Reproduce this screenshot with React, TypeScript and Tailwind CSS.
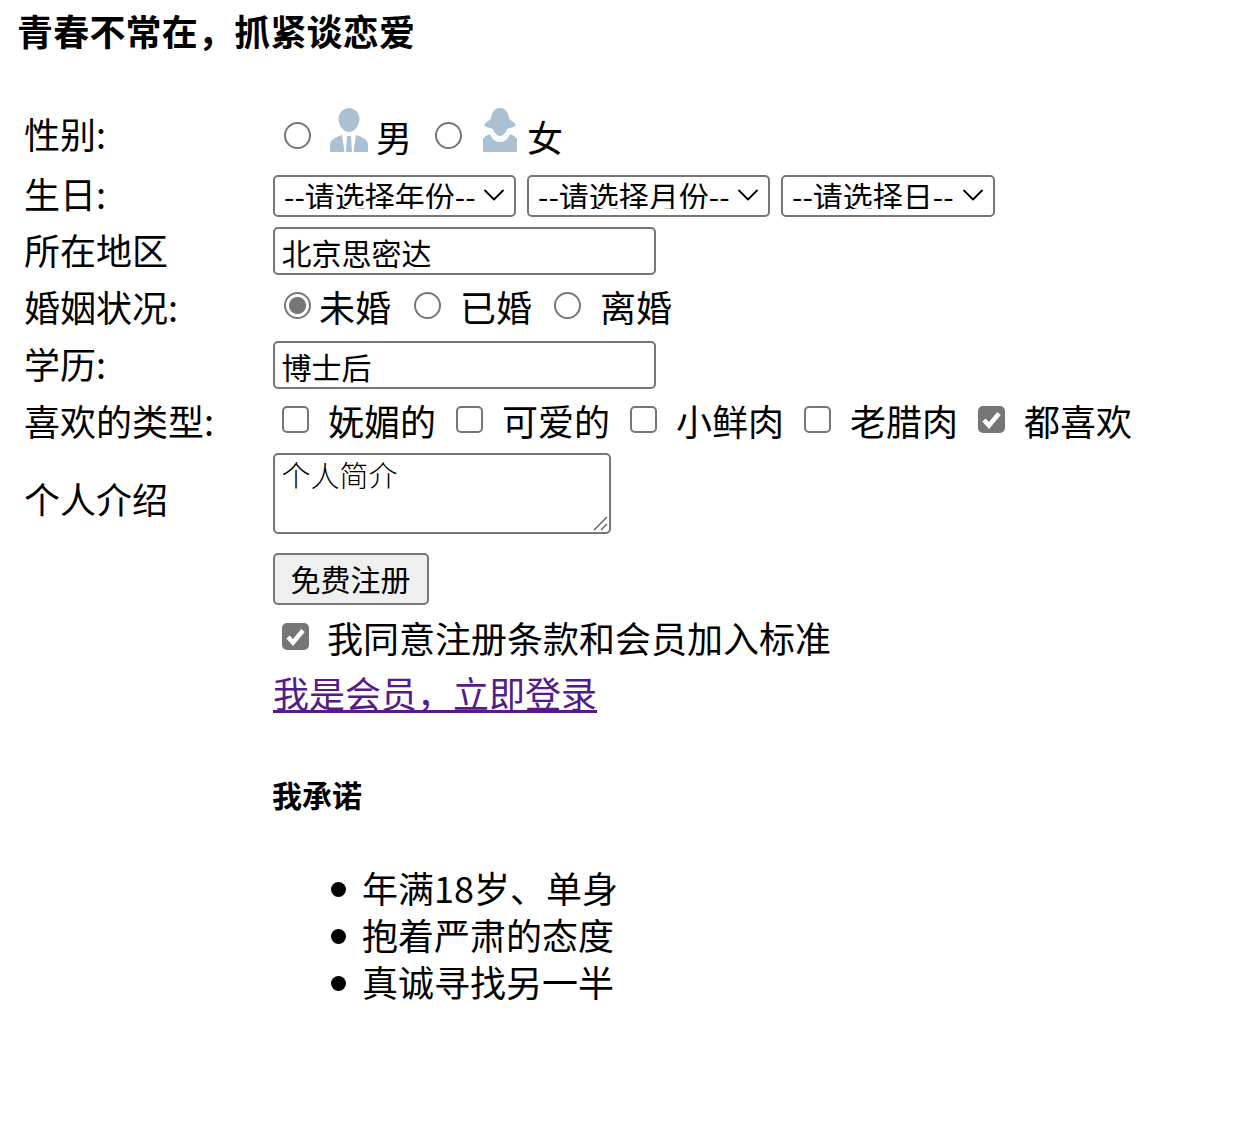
import React from "react";
import { ChevronDown } from "lucide-react";

function Male() {
  return (
    <svg width="38" height="44" viewBox="0 0 38 44" className="blur-[0.6px] block">
      <path d="M19 0C25 0 29.500 5 29.500 11C29.500 17 25 24 19 24C13 24 8.500 17 8.500 11C8.500 5 13 0 19 0Z" fill="#a9c1d3" />
      <path d="M0 44V36C1 31 6 29 12 27L14.500 44ZM38 44V36C37 31 32 29 26 27L23.500 44ZM17 28H21L22 44H16Z" fill="#a9c1d3" />
    </svg>
  );
}

function Female() {
  return (
    <svg width="36" height="44" viewBox="0 0 36 44" className="blur-[0.6px] block">
      <path d="M18 0C24 0 26 5 27 10C28 13 33 14 34 17C33 19 28 20 25 21C24 25 21 28 18 28C15 28 12 25 11 21C8 20 3 19 2 17C3 14 8 13 9 10C10 5 12 0 18 0Z" fill="#a9c1d3" />
      <path d="M1 44V31C3 28 6 27 8 26C10 31 13 34 18 34C23 34 26 31 28 26C30 27 33 28 35 31V44Z" fill="#a9c1d3" />
    </svg>
  );
}

function Radio({ checked = false, lift = false }: { checked?: boolean; lift?: boolean }) {
  return (
    <input
      type="radio"
      defaultChecked={checked}
      className={`appearance-none block w-[27px] h-[27px] m-0 shrink-0 rounded-full border-2 border-[#767676] bg-white checked:bg-[radial-gradient(circle,#767676_0,#767676_8px,#ffffff_9px)] ${lift ? "mb-[6px]" : ""}`}
    />
  );
}

function Check({ label, checked = false, tight = false }: { label: string; checked?: boolean; tight?: boolean }) {
  return (
    <label className="flex items-center">
      <span className={`relative w-[27px] h-[27px] mb-[6px] shrink-0 ${tight ? "mr-[18px]" : "mr-[19px]"}`}>
        <input
          type="checkbox"
          defaultChecked={checked}
          className="appearance-none block w-[27px] h-[27px] m-0 rounded-[5px] border-2 border-[#767676] bg-white checked:bg-[#767676]"
        />
        {checked && (
          <svg width="27" height="27" viewBox="0 0 27 27" className="absolute left-0 top-0 pointer-events-none">
            <path d="M6 14L11 19.500L21 7.500" fill="none" stroke="#ffffff" strokeWidth="4.500" />
          </svg>
        )}
      </span>
      <span className="mb-[4px]">{label}</span>
    </label>
  );
}

function Sel({ label, w }: { label: string; w: string }) {
  return (
    <div className={`relative h-[42px] mb-[1px] ${w}`}>
      <select className="appearance-none block w-full h-full border-2 border-[#767676] rounded-[5px] bg-white text-[30px] leading-[37px] pl-[9px] pb-[6px] text-black">
        <option>{label}</option>
      </select>
      <ChevronDown className="absolute right-[4px] top-[2px] pointer-events-none" size={36} strokeWidth={1.2} />
    </div>
  );
}

export default function App() {
  return (
    <div
      className="w-[1239px] h-[1125px] bg-white text-black text-[36px] leading-[54px] overflow-hidden"
      style={{ fontFamily: '"Noto Sans CJK SC", sans-serif' }}
    >
      <h4 className="pl-[17px] pt-[3px] h-[104px] font-bold text-[36px] leading-[54px] tracking-[0.2px]">青春不常在，抓紧谈恋爱</h4>

      <div className="pl-[24px] grid grid-cols-[249px_1fr]">
        <div className="h-[62px] flex items-center pb-[4px]">性别:</div>
        <div className="h-[62px] flex items-center pl-[11px]">
          <Radio />
          <span className="ml-[19px] mb-[10px]"><Male /></span>
          <span className="ml-[8px] mt-[2px]">男</span>
          <span className="ml-[23px]"><Radio /></span>
          <span className="ml-[20px] mb-[10px]"><Female /></span>
          <span className="ml-[9px] mt-[2px]">女</span>
        </div>

        <div className="h-[60px] flex items-center pb-[6px]">生日:</div>
        <div className="h-[60px] flex items-center gap-[11px]">
          <Sel label="--请选择年份--" w="w-[243px]" />
          <Sel label="--请选择月份--" w="w-[243px]" />
          <Sel label="--请选择日--" w="w-[214px]" />
        </div>

        <div className="h-[50px] flex items-center pb-[4px]">所在地区</div>
        <div className="h-[50px] flex items-center">
          <input
            defaultValue="北京思密达"
            className="w-[383px] h-[48px] mb-[1px] border-2 border-[#767676] rounded-[5px] text-[30px] pl-[6.5px] pt-[2px] leading-[40px]"
          />
        </div>

        <div className="h-[64px] flex items-center pb-[4px]">婚姻状况:</div>
        <div className="h-[64px] flex items-center pl-[11px]">
          <Radio checked lift />
          <span className="ml-[8px] mb-[4px]">未婚</span>
          <span className="ml-[23px]"><Radio lift /></span>
          <span className="ml-[19px] mb-[4px]">已婚</span>
          <span className="ml-[22px]"><Radio lift /></span>
          <span className="ml-[19px] mb-[4px]">离婚</span>
        </div>

        <div className="h-[50px] flex items-center pb-[4px]">学历:</div>
        <div className="h-[50px] flex items-center">
          <input
            defaultValue="博士后"
            className="w-[383px] h-[48px] mb-[1px] border-2 border-[#767676] rounded-[5px] text-[30px] pl-[6.5px] pt-[2px] leading-[40px]"
          />
        </div>

        <div className="h-[64px] flex items-center pb-[4px]">喜欢的类型:</div>
        <div className="h-[64px] flex items-center pl-[9px] gap-[20px]">
          <Check label="妩媚的" />
          <Check label="可爱的" />
          <Check label="小鲜肉" />
          <Check label="老腊肉" />
          <Check label="都喜欢" checked />
        </div>

        <div className="h-[80px] flex items-center pt-[8px]">个人介绍</div>
        <div className="relative h-[80px] w-[338px] -mt-[1px]">
          <textarea
            defaultValue="个人简介"
            className="w-[338px] h-[81px] border-2 border-[#767676] rounded-[5px] text-[29px] leading-[36px] pl-[6.5px] pt-[1px] resize-none font-light block"
          />
          <svg width="15" height="15" viewBox="0 0 15 15" className="absolute right-[3px] -bottom-[-2px] pointer-events-none">
            <path d="M1 14L14 1M8 14L14 8" stroke="#555555" strokeWidth="1.300" fill="none" />
          </svg>
        </div>

        <div />
        <div className="pt-[19px]">
          <button className="w-[156px] h-[52px] border-2 border-[#767676] rounded-[5px] bg-[#efefef] text-[30px] leading-[40px] pb-[2px] pr-[1px] block">
            免费注册
          </button>
        </div>

        <div />
        <div className="h-[64px] flex items-center pl-[9px] pt-[4px]">
          <Check label="我同意注册条款和会员加入标准" checked tight />
        </div>

        <div />
        <div className="h-[46px] flex items-center">
          <a href="#" className="text-[#551a8b] underline">我是会员，立即登录</a>
        </div>

        <div />
        <h5 className="pt-[57px] pb-[2px] text-[30px] leading-[44px] font-bold -ml-[1px]">我承诺</h5>

        <div />
        <ul className="list-none pl-[58px] pt-[48px]">
          {["年满18岁、单身", "抱着严肃的态度", "真诚寻找另一半"].map((t) => (
            <li key={t} className="h-[47px] leading-[47px] flex items-center">
              <span className="w-[15px] h-[15px] rounded-full bg-black mr-[16px] shrink-0" />
              <span className="mb-[4px]">{t}</span>
            </li>
          ))}
        </ul>
      </div>
    </div>
  );
}
